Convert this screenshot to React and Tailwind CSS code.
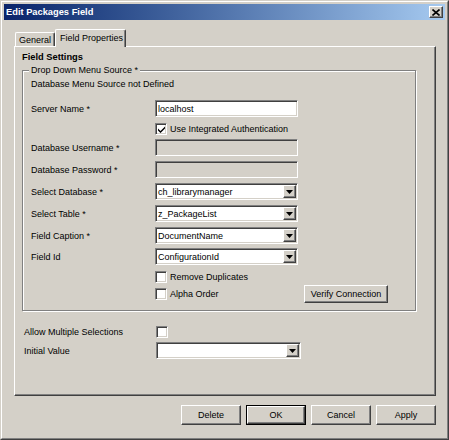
import React from 'react';

const sunken =
  'border border-t-[#808080] border-l-[#808080] border-r-white border-b-white shadow-[inset_1px_1px_0_#404040,inset_-1px_-1px_0_#d4d0c8]';
const raised =
  'border border-t-white border-l-white border-r-[#404040] border-b-[#404040] shadow-[inset_-1px_-1px_0_#808080,inset_1px_1px_0_#d4d0c8]';

const CheckBox = ({ checked }) => (
  <span className={`w-[12px] h-[12px] bg-white flex items-center justify-center shrink-0 ${sunken}`}>
    {checked && (
      <svg width="7" height="7" viewBox="0 0 7 7">
        <polygon points="0,2.5 2.5,5 7,0.5 7,2.5 2.5,7 0,4.5" fill="#000" />
      </svg>
    )}
  </span>
);

const TextBox = ({ value, disabled }) => (
  <div
    className={`w-[143px] h-[17px] flex items-center pl-[2px] ${sunken} ${
      disabled ? 'bg-[#d4d0c8]' : 'bg-white'
    }`}
  >
    {value}
  </div>
);

const Select = ({ value, width = 'w-[143px]' }) => (
  <div className={`${width} h-[17px] bg-white flex items-center ${sunken}`}>
    <span className="flex-1 pl-[2px] truncate">{value}</span>
    <span className={`w-[13px] h-[13px] mr-[1px] bg-[#d4d0c8] flex items-center justify-center ${raised}`}>
      <svg width="7" height="4" viewBox="0 0 7 4">
        <path d="M0 0H7L3.5 4Z" fill="#000" />
      </svg>
    </span>
  </div>
);

const Row = ({ label, children, className = '' }) => (
  <div className={`flex items-center ${className}`}>
    <span className="w-[124px] shrink-0">{label}</span>
    {children}
  </div>
);

const Button = ({ children, isDefault, className = '' }) =>
  isDefault ? (
    <div className={`border border-black ${className}`}>
      <div className={`w-full h-full flex items-center justify-center bg-[#d4d0c8] ${raised}`}>{children}</div>
    </div>
  ) : (
    <div className={`flex items-center justify-center bg-[#d4d0c8] ${raised} ${className}`}>{children}</div>
  );

export default function App() {
  return (
    <div className="w-[449px] h-[440px] bg-[#d4d0c8] border border-[#d4d0c8] border-r-[#404040] border-b-[#404040] text-black text-[9px] leading-[12px] font-['Liberation_Sans',Arial,sans-serif]">
      <div className="h-full border border-white border-r-[#808080] border-b-[#808080] p-[2px] flex flex-col">
        {/* title bar */}
        <div className="h-[16px] flex items-center justify-between pl-[2px] pr-[2px] bg-gradient-to-r from-[#0a246a] to-[#a6caf0]">
          <span className="text-white font-bold text-[9.3px]">Edit Packages Field</span>
          <span className={`w-[14px] h-[12px] bg-[#d4d0c8] flex items-center justify-center ${raised}`}>
            <svg width="8" height="7" viewBox="0 0 8 7">
              <path d="M0.5 0.5L7.5 6.5M7.5 0.5L0.5 6.5" stroke="#000" strokeWidth="1.6" />
            </svg>
          </span>
        </div>

        <div className="ml-[10px] w-[422px] mt-[9px]">
          {/* tabs */}
          <div className="flex items-end h-[17px] pl-[1px]">
            <div className="w-[40px] h-[14px] border border-t-white border-l-white border-r-[#404040] border-b-0 shadow-[inset_-1px_0_0_#808080] rounded-t-[2px] flex items-center pl-[3px]">
              General
            </div>
            <div className="relative z-10 -mb-[1px] w-[71px] h-[18px] bg-[#d4d0c8] border border-t-white border-l-white border-r-[#404040] border-b-0 shadow-[inset_-1px_0_0_#808080] rounded-t-[2px] flex items-start pt-[2px] pl-[4px]">
              Field Properties
            </div>
          </div>

          {/* panel */}
          <div className="h-[350px] border border-t-white border-l-white border-r-[#404040] border-b-[#404040] shadow-[inset_-1px_-1px_0_#808080] pl-[7px] pt-[4px]">
            <div className="font-bold text-[9.3px]">Field Settings</div>

            <div className="relative mt-[7px] w-[394px] border border-[#808080] shadow-[inset_1px_1px_0_#fff,1px_1px_0_#fff] pl-[8px] pt-[7px] pb-[7px]">
              <span className="absolute -top-[7px] left-[6px] px-[2px] bg-[#d4d0c8]">Drop Down Menu Source *</span>
              <div>Database Menu Source not Defined</div>

              <Row label="Server Name *" className="mt-[10px]">
                <TextBox value="localhost" />
              </Row>
              <Row className="mt-[6px] h-[12px]">
                <span className="flex items-center gap-[3px]">
                  <CheckBox checked />
                  Use Integrated Authentication
                </span>
              </Row>
              <Row label="Database Username *" className="mt-[4px]">
                <TextBox disabled />
              </Row>
              <Row label="Database Password *" className="mt-[5px]">
                <TextBox disabled />
              </Row>
              <Row label="Select Database *" className="mt-[5px]">
                <Select value="ch_librarymanager" />
              </Row>
              <Row label="Select Table *" className="mt-[5px]">
                <Select value="z_PackageList" />
              </Row>
              <Row label="Field Caption *" className="mt-[5px]">
                <Select value="DocumentName" />
              </Row>
              <Row label="Field Id" className="mt-[4px]">
                <Select value="ConfigurationId" />
              </Row>
              <Row className="mt-[6px] h-[12px]">
                <span className="flex items-center gap-[3px]">
                  <CheckBox />
                  Remove Duplicates
                </span>
              </Row>
              <Row className="mt-[2px] h-[18px]">
                <span className="flex items-center gap-[3px]">
                  <CheckBox />
                  Alpha Order
                </span>
                <Button className="ml-auto mr-[27px] w-[84px] h-[18px]">Verify Connection</Button>
              </Row>
            </div>

            <div className="pl-[2px]">
              <div className="flex items-center h-[13px] mt-[14px]">
                <span className="w-[132px] shrink-0">Allow Multiple Selections</span>
                <CheckBox />
              </div>
              <div className="flex items-center mt-[4px]">
                <span className="w-[132px] shrink-0">Initial Value</span>
                <Select value="" width="w-[145px]" />
              </div>
            </div>
          </div>

          {/* bottom buttons */}
          <div className="flex justify-end gap-[5px] mt-[9px]">
            <Button className="w-[60px] h-[20px]">Delete</Button>
            <Button isDefault className="w-[60px] h-[20px]">OK</Button>
            <Button className="w-[60px] h-[20px]">Cancel</Button>
            <Button className="w-[60px] h-[20px]">Apply</Button>
          </div>
        </div>
      </div>
    </div>
  );
}
